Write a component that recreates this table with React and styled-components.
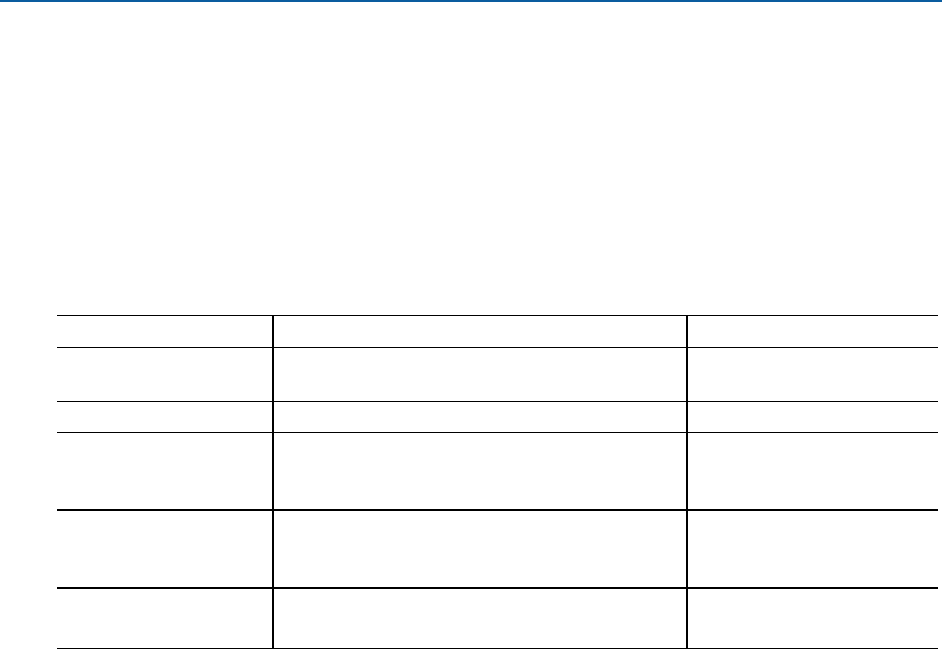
import React from "react";
import styled, { createGlobalStyle } from "styled-components";

const Global = createGlobalStyle`
  html, body { margin: 0; padding: 0; background: #ffffff; font-family: "Liberation Sans", Arial, sans-serif; }
  #root { min-height: 649px; }
`;

const Page = styled.div`
  width: 942px;
  height: 649px;
  overflow: hidden;
  background: #ffffff;
`;

const TopBar = styled.div`
  height: 2px;
  background: #0a5c9f;
`;

const Table = styled.div`
  display: flex;
  flex-direction: column;
  margin: 313px 4px 0 57px;
  border-bottom: 2px solid #000;
`;

const Row = styled.div`
  display: grid;
  grid-template-columns: 215px 414px 1fr;
  box-sizing: border-box;
  height: ${(p) => p.$h}px;
  border-top: ${(p) => p.$b}px solid #000;
`;

const Cell = styled.div`
  box-sizing: border-box;
  border-left: ${(p) => (p.$first ? "none" : "2px solid #000")};
  font-size: 13px;
  color: #000;
`;

const rows = [
  { h: 32, b: 1 },
  { h: 54, b: 1 },
  { h: 31, b: 1 },
  { h: 77, b: 1 },
  { h: 78, b: 2 },
  { h: 61, b: 2 },
];

export default function App() {
  return (
    <Page>
      <Global />
      <TopBar />
      <Table>
        {rows.map((r, i) => (
          <Row key={i} $h={r.h} $b={r.b}>
            <Cell $first />
            <Cell />
            <Cell />
          </Row>
        ))}
      </Table>
    </Page>
  );
}
